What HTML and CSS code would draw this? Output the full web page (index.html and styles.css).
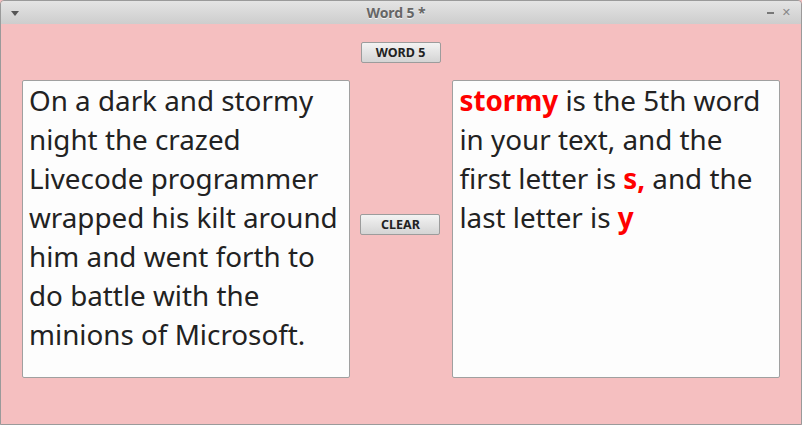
FILE: index.html
```
<!DOCTYPE html>
<html>
<head>
<meta charset="utf-8">
<link rel="stylesheet" href="styles.css">
</head>
<body>
<div class="window">
  <div class="titlebar">
    <span class="menu-arrow"></span>
    <span class="title">Word 5 *</span>
    <span class="controls"><span class="min"></span><span class="close">✕</span></span>
  </div>
  <div class="content">
    <div class="top-row"><button class="btn">WORD 5</button></div>
    <div class="main-row">
      <div class="field">On a dark and stormy night the crazed Livecode programmer wrapped his kilt around him and went forth to do battle with the minions of Microsoft.</div>
      <div class="middle"><button class="btn clear">CLEAR</button></div>
      <div class="field"><b class="hl">stormy</b> is the 5th word in your text, and the first letter is <b class="hl">s,</b> and the last letter is <b class="hl">y</b></div>
    </div>
  </div>
</div>
</body>
</html>
```
FILE: styles.css
```
html, body {
  margin: 0;
  padding: 0;
  background: #f5bfc0;
}
.window {
  width: 802px;
  height: 425px;
  box-sizing: border-box;
  border: 1px solid #9a9a9a;
  border-radius: 4px 4px 0 0;
  background: #f5bfc0;
  overflow: hidden;
  display: flex;
  flex-direction: column;
}
.titlebar {
  height: 23px;
  flex: none;
  background: linear-gradient(#e4e4e4, #cdcdcd);
  position: relative;
  display: flex;
  align-items: center;
  justify-content: center;
  font-family: "Noto Sans", "DejaVu Sans", sans-serif;
}
.title {
  font-size: 14px;
  font-weight: bold;
  color: #666;
  text-shadow: 0 1px 0 #f4f4f4;
  letter-spacing: -0.1px;
  margin-right: 10px;
}
.menu-arrow {
  position: absolute;
  left: 10px;
  top: 10px;
  width: 0;
  height: 0;
  border-left: 4px solid transparent;
  border-right: 4px solid transparent;
  border-top: 5px solid #555;
}
.controls {
  position: absolute;
  right: 10px;
  top: 0;
  height: 23px;
  display: flex;
  align-items: center;
  gap: 8px;
}
.min {
  width: 7px;
  height: 2px;
  background: #777;
  margin-top: 1px;
}
.close {
  font-size: 11px;
  color: #888;
  font-family: "DejaVu Sans", sans-serif;
}
.content {
  flex: 1;
  display: flex;
  flex-direction: column;
  padding: 18px 21px 0 21px;
}
.top-row {
  display: flex;
  justify-content: center;
  padding-right: 1px;
}
.btn {
  width: 80px;
  height: 21px;
  box-sizing: border-box;
  border: 1px solid #9c9c9c;
  border-radius: 2px;
  background: linear-gradient(#f3f3f3, #d4d4d4);
  font-family: "Noto Sans", "DejaVu Sans", sans-serif;
  font-size: 12.5px;
  font-weight: bold;
  color: #222;
  padding: 0;
  line-height: 19px;
}
.main-row {
  margin-top: 17px;
  display: flex;
}
.field {
  width: 328px;
  height: 298px;
  box-sizing: border-box;
  background: #fdfdfd;
  border: 1px solid #a0a0a0;
  border-radius: 2px;
  padding: 0 5px 0 6px;
  font-family: "Noto Sans", "Open Sans", sans-serif;
  font-size: 27.8px;
  line-height: 39px;
  color: #222;
}
.middle {
  width: 103px;
  display: flex;
  justify-content: center;
  padding-right: 1px;
  box-sizing: border-box;
}
.clear {
  margin-top: 134px;
}
.hl {
  color: #f00;
  font-weight: bold;
}
```
